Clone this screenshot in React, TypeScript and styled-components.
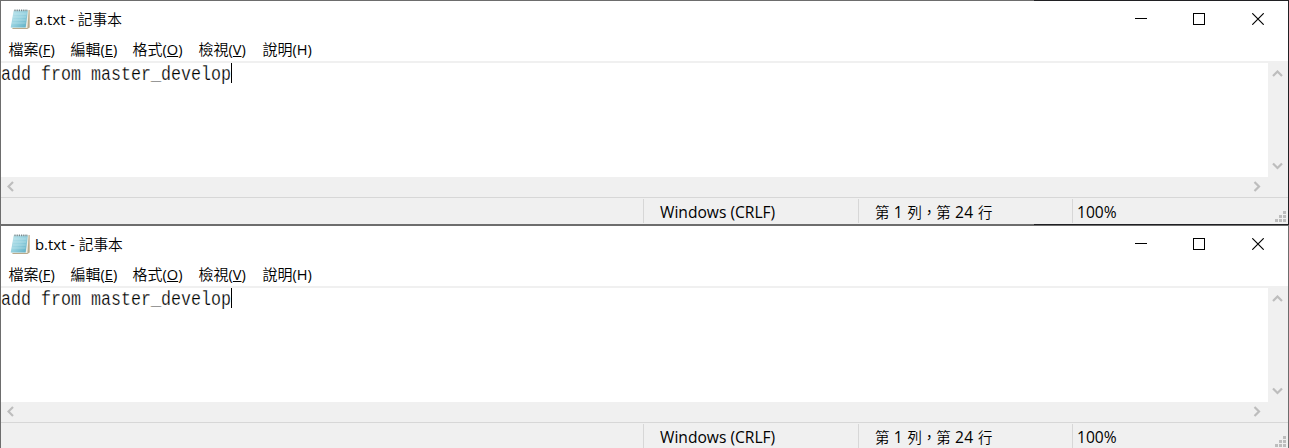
import React from "react";
import styled, { createGlobalStyle } from "styled-components";

const GlobalStyle = createGlobalStyle`
  * { box-sizing: border-box; }
  body { margin: 0; background: #fff; overflow: hidden; }
`;

const Desktop = styled.main`
  width: 1289px;
  height: 448px;
  overflow: hidden;
  font-family: "Open Sans", "Noto Sans CJK TC", sans-serif;
  color: #000;
`;

const Window = styled.section<{ $right: string }>`
  width: 1289px;
  height: 225px;
  display: grid;
  grid-template-rows: 1px 36px 24px 2px 114px 20px 27px 1px;
  border-left: 1px solid #6d6d6d;
  border-right: 1px solid ${(p) => p.$right};
  background: #fff;
`;

const Edge = styled.div<{ $split?: boolean }>`
  background: ${(p) =>
    p.$split ? "linear-gradient(to right, #6d6d6d 1033px, #202023 1033px)" : "#6d6d6d"};
`;

const TitleBar = styled.header`
  display: flex;
  align-items: center;
  padding-left: 9px;
`;

const Title = styled.h1`
  flex: 1;
  margin: 0 0 0 4px;
  font-size: 14.8px;
  font-weight: 400;
  line-height: 34px;
  letter-spacing: 0;
  white-space: pre;
`;

const Cjk = styled.span<{ $size?: number }>`
  font-family: "Noto Sans CJK TC", sans-serif;
  font-size: ${(p) => p.$size ?? 15}px;
  font-weight: 350;
  letter-spacing: 0;
`;

const Controls = styled.div`
  display: flex;
  margin-right: 1px;
`;

const ControlButton = styled.button`
  width: 58.5px;
  height: 36px;
  padding: 0;
  border: 0;
  background: none;
  display: grid;
  place-items: center;
`;

const MenuBar = styled.nav`
  display: flex;
  padding-left: 7.5px;
`;

const MenuItem = styled.div<{ $width: number }>`
  width: ${(p) => p.$width}px;
  font-size: 14.6px;
  line-height: 24px;
  letter-spacing: 0;
  white-space: nowrap;
`;

const Divider = styled.div`
  background: #f0f0f0;
`;

const Editor = styled.div`
  display: flex;
  justify-content: space-between;
`;

const TextLine = styled.div`
  display: flex;
  height: 20px;
`;

const TextRun = styled.div`
  width: 230px;
  font-family: "Liberation Mono", monospace;
  font-size: 20px;
  line-height: 23px;
  white-space: pre;
  transform: scaleX(0.8333);
  transform-origin: left;
  -webkit-text-stroke: 0.25px #fff;
`;

const Caret = styled.div`
  width: 1px;
  height: 20px;
  background: #000;
`;

const VerticalBar = styled.div`
  width: 20px;
  background: #f0f0f0;
  display: flex;
  flex-direction: column;
  justify-content: space-between;
  align-items: center;
  padding: 7px 1px 7px 0;
`;

const HorizontalBar = styled.div`
  background: #f0f0f0;
  display: flex;
  justify-content: space-between;
  align-items: center;
  padding: 0 27px 1px 6px;
`;

const StatusBar = styled.footer`
  background: #f0f0f0;
  border-top: 1px solid #d7d7d7;
  display: grid;
  grid-template-columns: 642px 215px 214px 1fr auto;
`;

const StatusCell = styled.div<{ $pad?: number; $spacing?: number; $line?: number }>`
  height: 24px;
  margin-top: 1px;
  border-left: 1px solid #d7d7d7;
  padding-left: ${(p) => p.$pad ?? 16}px;
  font-size: 15.6px;
  line-height: ${(p) => p.$line ?? 26}px;
  letter-spacing: ${(p) => p.$spacing ?? 0}px;
  white-space: pre;
`;

const GripSlot = styled.div`
  align-self: end;
  padding: 0 2px 2px 0;
  line-height: 0;
`;

const NotepadIcon = () => (
  <svg width="21" height="22" viewBox="0.6 0 21 22">
    <defs>
      <linearGradient id="page" x1="0" y1="0" x2="1" y2="1">
        <stop offset="0" stopColor="#c0e6ed" />
        <stop offset="0.5" stopColor="#96d1df" />
        <stop offset="1" stopColor="#5aacc3" />
      </linearGradient>
    </defs>
    <path d="M5 2H20.3V19.5L18 21H3Z" fill="#b9aa8c" />
    <path d="M4.5 2H19.3L18 20H2Z" fill="#efeee5" />
    <path d="M4.3 2.5H18.5L16.3 19.5H1.3Z" fill="url(#page)" />
    <path d="M4 6H17M3.6 9H16.7M3.2 12H16.3M2.7 15H16" stroke="#d5f0f4" strokeWidth=".7" opacity=".6" />
    <path d="M5 2.3H18.5" stroke="#76858b" strokeWidth="1.8" strokeDasharray="1.2 1" />
  </svg>
);

const arrows = {
  up: "M1 6L5.5 1.5L10 6",
  down: "M1 1.5L5.5 6L10 1.5",
  left: "M6 1L1.5 5.5L6 10",
  right: "M1.5 1L6 5.5L1.5 10",
};

const Arrow = ({ dir }: { dir: keyof typeof arrows }) => {
  const vertical = dir === "up" || dir === "down";
  return (
    <svg width={vertical ? 11 : 8} height={vertical ? 8 : 11}>
      <path d={arrows[dir]} fill="none" stroke="#bdbdbd" strokeWidth="2.2" />
    </svg>
  );
};

const Grip = () => (
  <svg width="11" height="11" shapeRendering="crispEdges">
    <path d="M8 0h3v3h-3zM4 4h3v3h-3zM8 4h3v3h-3zM0 8h3v3h-3zM4 8h3v3h-3zM8 8h3v3h-3z" fill="#bdbdbd" />
  </svg>
);

const menus = [
  { label: "檔案", key: "F", width: 62 },
  { label: "編輯", key: "E", width: 62 },
  { label: "格式", key: "O", width: 66 },
  { label: "檢視", key: "V", width: 64 },
  { label: "說明", key: "H", width: 60, plain: true },
];

const Notepad = ({ file, right, splitTop }: { file: string; right: string; splitTop?: boolean }) => (
  <Window $right={right}>
    <Edge $split={splitTop} />
    <TitleBar>
      <NotepadIcon />
      <Title>
        {file} - <Cjk $size={14.7}>記事本</Cjk>
      </Title>
      <Controls>
        <ControlButton aria-label="minimize">
          <svg width="12" height="12" shapeRendering="crispEdges"><path d="M0 5.5H12" stroke="#000" /></svg>
        </ControlButton>
        <ControlButton aria-label="maximize">
          <svg width="12" height="12" shapeRendering="crispEdges"><path d="M.5 .5H11.5V11.5H.5Z" fill="none" stroke="#000" /></svg>
        </ControlButton>
        <ControlButton aria-label="close">
          <svg width="12" height="12"><path d="M.3 .3L11.7 11.7M11.7 .3L.3 11.7" stroke="#000" strokeWidth="1.15" /></svg>
        </ControlButton>
      </Controls>
    </TitleBar>
    <MenuBar>
      {menus.map((m) => (
        <MenuItem key={m.key} $width={m.width}>
          <Cjk>{m.label}</Cjk>({m.plain ? m.key : <u>{m.key}</u>})
        </MenuItem>
      ))}
    </MenuBar>
    <Divider />
    <Editor>
      <TextLine>
        <TextRun>add from master_develop</TextRun>
        <Caret />
      </TextLine>
      <VerticalBar>
        <Arrow dir="up" />
        <Arrow dir="down" />
      </VerticalBar>
    </Editor>
    <HorizontalBar>
      <Arrow dir="left" />
      <Arrow dir="right" />
    </HorizontalBar>
    <StatusBar>
      <div />
      <StatusCell>Windows (CRLF)</StatusCell>
      <StatusCell $spacing={0.35} $line={25}>
        <Cjk $size={14.4}>第</Cjk> 1 <Cjk $size={14.4}>列，第</Cjk> 24 <Cjk $size={14.4}>行</Cjk>
      </StatusCell>
      <StatusCell $pad={4}>100%</StatusCell>
      <GripSlot><Grip /></GripSlot>
    </StatusBar>
    <Edge $split />
  </Window>
);

export default function App() {
  return (
    <>
      <GlobalStyle />
      <Desktop>
        <Notepad file="a.txt" right="#202023" splitTop />
        <Notepad file="b.txt" right="#6d6d6d" />
      </Desktop>
    </>
  );
}
